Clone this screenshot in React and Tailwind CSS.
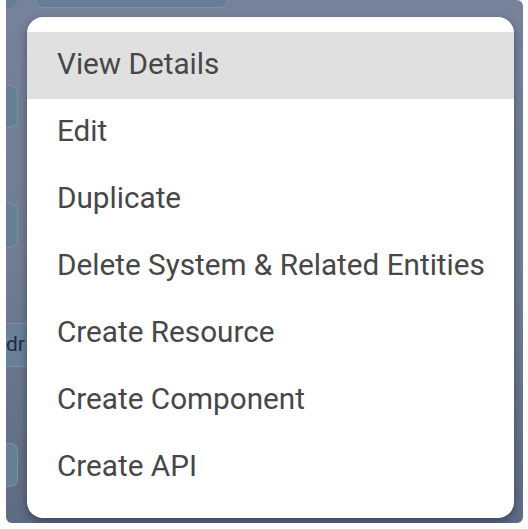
import React from 'react'

const items = [
  'View Details',
  'Edit',
  'Duplicate',
  'Delete System & Related Entities',
  'Create Resource',
  'Create Component',
  'Create API',
]

// Fields of the page that sits dimmed under the overlay
function BackdropPage() {
  return (
    <div className="flex h-full flex-col">
      <div className="flex h-[8px] gap-[18px]">
        <div className="w-[11px] rounded-br-[8px] bg-[#687d98]" />
        <div className="w-[193px] rounded-b-[8px] border-x border-b border-[#7d90a8] bg-[#677c97]" />
      </div>
      <div className="mt-[77px] h-[43px] w-[12px] rounded-r-[8px] border-y border-r border-[#7d90a8] bg-[#677e99]" />
      <div className="mt-[75px] h-[45px] w-[12px] rounded-r-[8px] border-y border-r border-[#7d90a8] bg-[#677e99]" />
      <div className="mt-[75px] flex h-[44px] w-[40px] items-center border-y border-[#7d90a8] bg-[#6a7f98] text-[21px] text-[#1e2b45] [font-family:Roboto,sans-serif]">
        dr
      </div>
      <div className="mt-[76px] h-[44px] w-[12px] rounded-r-[8px] border-y border-r border-[#7d90a8] bg-[#677e99]" />
    </div>
  )
}

export default function App() {
  return (
    <div className="h-[529px] w-[528px] bg-white">
      <div className="relative ml-[6px] h-[523px] w-[517px] overflow-hidden rounded-b-[6px] rounded-tr-[6px] bg-gradient-to-b from-[#76829a] via-[#717d95] to-[#5f6b83]">
        <BackdropPage />
        <div className="absolute left-[21px] top-[17px] w-[487px] rounded-[16px] bg-white pb-[17px] pt-[15px] shadow-[0_4px_8px_rgba(20,28,45,0.45)]">
          {items.map((label, i) => (
            <div
              key={label}
              className={
                'flex h-[67px] items-center whitespace-nowrap pb-[2px] pl-[30px] text-[29.7px] text-[#474747] [font-family:Roboto,sans-serif] ' +
                (i === 0 ? 'bg-[#e0e0e0]' : '')
              }
            >
              {label}
            </div>
          ))}
        </div>
      </div>
    </div>
  )
}
